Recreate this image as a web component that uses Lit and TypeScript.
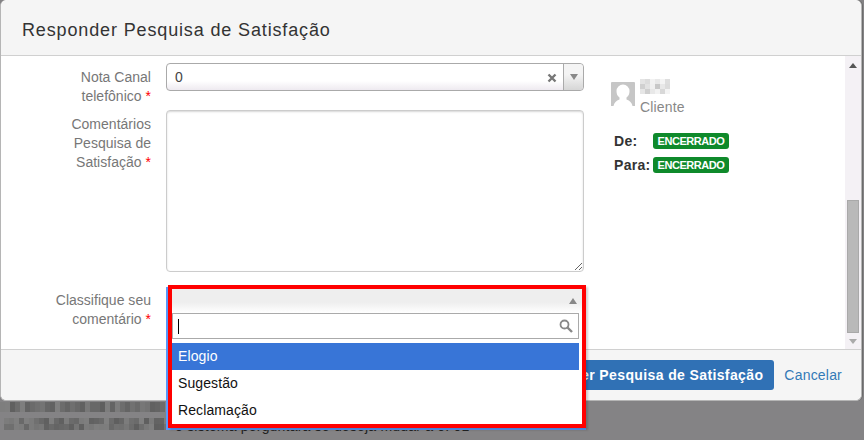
import { LitElement, html, css, svg } from "lit";
import { customElement } from "lit/decorators.js";

function mosaic(y: number, h: number, x0: number, x1: number, cell: number, seed: number) {
  const out = [];
  let s = seed;
  for (let x = x0; x < x1; x += cell) {
    s = (s * 9301 + 49297) % 233280;
    const v = 0x5e + Math.floor((s / 233280) * 0x24);
    const c = `rgb(${v},${v},${v})`;
    out.push(svg`<rect x=${x} y=${y} width=${cell} height=${h} fill=${c} />`);
  }
  return out;
}

const nameCells: [number, number, string][] = [
  [0, 0, "#e4e4e4"], [5, 0, "#dcdcdc"], [10, 0, "#f2f2f2"], [15, 0, "#e8e8e8"], [20, 0, "#f4f4f4"], [25, 0, "#dedede"],
  [0, 5, "#d0d0d0"], [5, 5, "#e2e2e2"], [10, 5, "#f0f0f0"], [15, 5, "#c8c8c8"], [20, 5, "#e8e8e8"], [25, 5, "#dcdcdc"],
  [0, 10, "#e6e6e6"], [5, 10, "#cfcfcf"], [10, 10, "#e8e8e8"], [15, 10, "#f2f2f2"], [20, 10, "#d8d8d8"], [25, 10, "#f4f4f4"],
];

@customElement("app-root")
export class AppRoot extends LitElement {
  static styles = css`
    :host {
      display: block;
      position: relative;
      width: 864px;
      height: 440px;
      overflow: hidden;
      background: #848385;
      font-family: "Liberation Sans", Arial, sans-serif;
      font-size: 14px;
      color: #333;
    }
    * { box-sizing: border-box; }
    .modal {
      display: flex;
      flex-direction: column;
      width: 862px;
      height: 401px;
      background: #fff;
      border: 1px solid #b5b5b5;
      border-top: 0;
      border-radius: 6px;
      box-shadow: 1px 0 0 #6c6c6c;
    }
    .header {
      flex: none;
      height: 56px;
      padding: 20px 0 0 21px;
      background: #f5f5f5;
      border-bottom: 1px solid #d0d0d0;
      border-radius: 6px 6px 0 0;
      font-size: 18px;
      line-height: 21px;
      letter-spacing: 0.86px;
      color: #333;
    }
    .body { flex: none; height: 293px; display: flex; overflow: hidden; }
    .form { flex: none; width: 583px; padding-top: 7px; }
    .row { display: grid; grid-template-columns: 150px 418px; column-gap: 15px; }
    .row.comments { margin-top: 4px; }
    .row.classify { margin-top: 14px; }
    .label {
      padding-top: 5px;
      text-align: right;
      line-height: 19px;
      letter-spacing: 0.02px;
      color: #777;
    }
    .req { color: #f00; }
    .select {
      display: flex;
      align-items: center;
      height: 28px;
      border: 1px solid #aaa;
      border-radius: 4px;
      background: linear-gradient(#fff 65%, #eeeaf0);
      color: #444;
    }
    .value { flex: 1; padding-left: 8px; letter-spacing: 0.6px; }
    .clear { flex: none; width: 23px; height: 12px; display: flex; justify-content: center; margin-top: 2px; }
    .caret {
      flex: none;
      width: 20px;
      height: 100%;
      display: flex;
      align-items: center;
      justify-content: center;
      border-left: 1px solid #aaa;
      border-radius: 0 4px 4px 0;
      background: linear-gradient(#f4f4f4 40%, #d6d6d6);
    }
    textarea {
      display: block;
      width: 418px;
      height: 162px;
      padding: 6px 12px;
      border: 1px solid #ccc;
      border-radius: 4px;
      outline: 0;
      box-shadow: inset 0 1px 2px rgba(0, 0, 0, 0.16);
      font: inherit;
      background: #fff;
    }
    .side { flex: 1; padding: 23px 0 0 27px; }
    .person { display: flex; gap: 5px; align-items: flex-start; }
    .avatar { margin-top: 3px; flex: none; display: block; }
    .who { display: flex; flex-direction: column; }
    .who svg { display: block; }
    .role { color: #888; line-height: 20px; letter-spacing: 0.15px; margin-top: 3px; }
    .status { display: grid; grid-template-columns: 39px auto; row-gap: 8px; margin: 16px 0 0 3px; justify-content: start; align-items: center; }
    .status b { font-size: 14px; line-height: 16px; letter-spacing: 0.3px; color: #333; }
    .badge {
      width: 76px;
      height: 16px;
      border-radius: 3px;
      background: #0f8a2b;
      color: #fff;
      font-size: 11px;
      font-weight: 700;
      line-height: 16px;
      text-align: center;
      letter-spacing: -0.45px;
    }
    .scroll {
      flex: none;
      width: 16px;
      display: flex;
      flex-direction: column;
      align-items: center;
      background: #f4f1f5;
    }
    .up { margin-top: 7px; }
    .thumb {
      margin-top: 132px;
      width: 12px;
      height: 133px;
      background: #b9b9b9;
      border: 1px solid #a9a9a9;
    }
    .down { margin-top: 6px; }
    .footer {
      flex: 1;
      display: flex;
      align-items: center;
      justify-content: flex-end;
      gap: 10px;
      padding: 0 19px 0 0;
      background: #f5f5f5;
      border-top: 1px solid #d0d0d0;
      border-radius: 0 0 6px 6px;
    }
    .submit {
      height: 30px;
      padding: 0 11px;
      border: 0;
      border-radius: 3px;
      background: #3071b5;
      color: #fff;
      font: 700 14px "Liberation Sans", Arial, sans-serif;
      letter-spacing: 0.38px;
    }
    .cancel { color: #337ab7; letter-spacing: 0.2px; text-decoration: none; }
    .backdrop { position: relative; display: flex; align-items: flex-start; height: 39px; }
    .backdrop svg { flex: none; display: block; }
    .behind { margin: 17px 0 0 9px; font-size: 14px; line-height: 16px; letter-spacing: 0.2px; color: #222; white-space: nowrap; }
    .dropdown {
      position: absolute;
      left: 166px;
      top: 287px;
      width: 420px;
      height: 143px;
      border-left: 2px solid #5897fb;
      border-bottom: 2px solid #5897fb;
    }
    .frame {
      position: absolute;
      left: 0;
      top: -2px;
      width: 418px;
      height: 143px;
      display: flex;
      flex-direction: column;
      background: #fff;
      border: 4px solid #f00;
      box-shadow: 2px 2px 2px rgba(0, 0, 0, 0.18);
    }
    .open {
      flex: none;
      height: 24px;
      display: flex;
      align-items: center;
      justify-content: flex-end;
      padding-right: 5px;
      background: linear-gradient(#eee 55%, #fff);
    }
    .search {
      flex: none;
      width: 407px;
      height: 26px;
      display: flex;
      align-items: center;
      justify-content: space-between;
      padding: 0 5px;
      border: 1px solid #aaa;
    }
    .cursor { width: 1px; height: 15px; background: #000; }
    .options { list-style: none; margin: 4px 0 0; padding: 0; width: 407px; }
    .options li { height: 27px; padding-left: 6px; line-height: 27px; color: #111; letter-spacing: 0.1px; }
    .options li.active { background: #3875d7; color: #fff; }
  `;

  render() {
    return html`
      <div class="modal">
        <div class="header">Responder Pesquisa de Satisfação</div>
        <div class="body">
          <div class="form">
            <div class="row">
              <div class="label">Nota Canal<br />telefônico <span class="req">*</span></div>
              <div class="select">
                <span class="value">0</span>
                <span class="clear">
                  <svg width="10" height="12" viewBox="0 0 10 12"><path d="M1.500 2.500l7 7M8.500 2.500l-7 7" stroke="#777" stroke-width="2.400" fill="none" /></svg>
                </span>
                <span class="caret">
                  <svg width="8" height="6" viewBox="0 0 8 6"><path d="M0 0h8L4 6z" fill="#888" /></svg>
                </span>
              </div>
            </div>
            <div class="row comments">
              <div class="label">Comentários<br />Pesquisa de<br />Satisfação <span class="req">*</span></div>
              <textarea></textarea>
            </div>
            <div class="row classify">
              <div class="label">Classifique seu<br />comentário <span class="req">*</span></div>
              <div class="select"></div>
            </div>
          </div>
          <div class="side">
            <div class="person">
              <svg class="avatar" width="24" height="24" viewBox="0 0 24 24">
                <path d="M1 0h22a1 1 0 0 1 1 1v23h-2.500q-1-5-6-6.500v-2q3-2 3-6.500a5.500 5.500 0 0 0-13 0q0 4.500 3 6.500v2q-5 1.500-6 6.500H0V1a1 1 0 0 1 1-1z" fill="#c6c6c6" />
              </svg>
              <div class="who">
                <svg width="30" height="15" viewBox="0 0 30 15">
                  ${nameCells.map(([x, y, c]) => svg`<rect x=${x} y=${y} width="5" height="5" fill=${c} />`)}
                </svg>
                <span class="role">Cliente</span>
              </div>
            </div>
            <div class="status">
              <b>De:</b><span class="badge">ENCERRADO</span>
              <b>Para:</b><span class="badge">ENCERRADO</span>
            </div>
          </div>
          <div class="scroll">
            <svg class="up" width="8" height="5" viewBox="0 0 8 5"><path d="M0 5h8L4 0z" fill="#555" /></svg>
            <div class="thumb"></div>
            <svg class="down" width="8" height="5" viewBox="0 0 8 5"><path d="M0 0h8L4 5z" fill="#aaa" /></svg>
          </div>
        </div>
        <div class="footer">
          <button class="submit">Responder Pesquisa de Satisfação</button>
          <a class="cancel">Cancelar</a>
        </div>
      </div>
      <div class="backdrop">
        <svg width="166" height="39" viewBox="0 0 166 39">
          ${mosaic(1, 10, 0, 165, 5, 17)}
          ${mosaic(17, 6, 4, 165, 5, 91)}
          ${mosaic(23, 6, 4, 165, 5, 233)}
        </svg>
        <span class="behind">o sistema perguntará se deseja mudar a 0. 01</span>
      </div>
      <div class="dropdown">
        <div class="frame">
          <div class="open">
            <svg width="8" height="6" viewBox="0 0 8 6"><path d="M0 6h8L4 0z" fill="#888" /></svg>
          </div>
          <div class="search">
            <span class="cursor"></span>
            <svg width="14" height="14" viewBox="0 0 14 14">
              <circle cx="5.500" cy="5.500" r="4" fill="none" stroke="#888" stroke-width="1.800" />
              <path d="M8.500 8.500l4.500 4.500" stroke="#888" stroke-width="2.400" />
            </svg>
          </div>
          <ul class="options">
            <li class="active">Elogio</li>
            <li>Sugestão</li>
            <li>Reclamação</li>
          </ul>
        </div>
      </div>
    `;
  }
}
